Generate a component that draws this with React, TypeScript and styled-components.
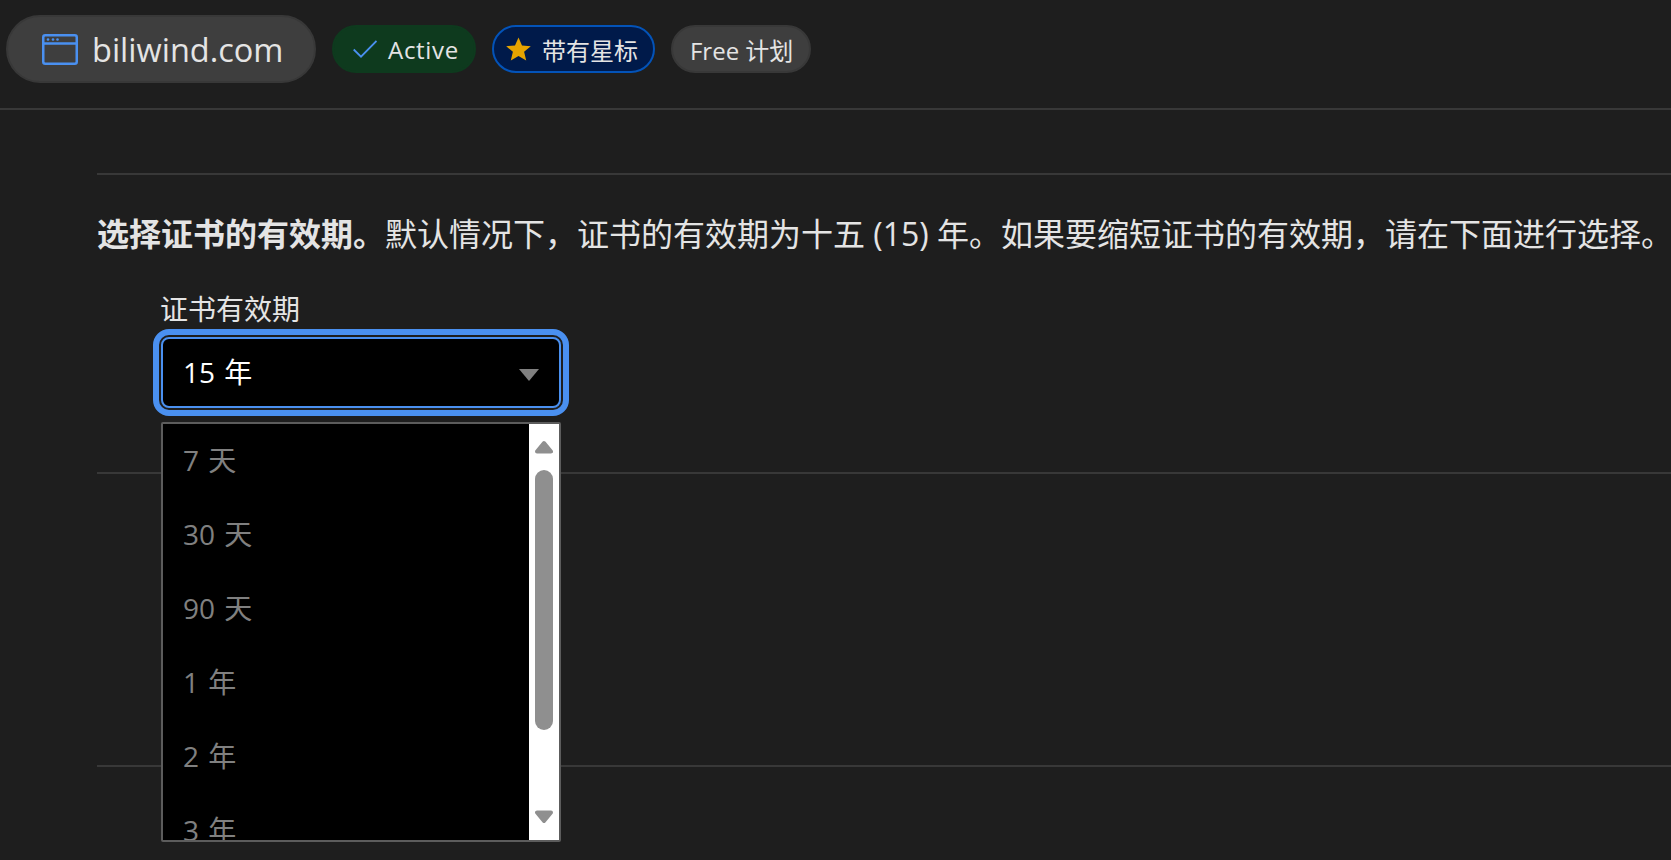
import { createGlobalStyle, styled } from 'styled-components';

const GlobalStyle = createGlobalStyle`
  html, body {
    margin: 0;
    height: 100%;
    background: #1e1e1e;
    overflow: hidden;
  }
  body {
    font-family: 'Open Sans', 'Noto Sans CJK SC', sans-serif;
    color: #e4e4e4;
  }
`;

const Page = styled.div`
  width: 1671px;
  height: 860px;
  overflow: hidden;
`;

const Header = styled.header`
  height: 110px;
  box-sizing: border-box;
  padding: 15px 0 0 6px;
  display: flex;
  align-items: flex-start;
  gap: 16px;
  border-bottom: 2px solid #383838;
`;

const DomainPill = styled.div`
  width: 310px;
  height: 68px;
  box-sizing: border-box;
  padding-left: 34px;
  display: flex;
  align-items: center;
  gap: 14px;
  border: 2px solid #383838;
  border-radius: 34px;
  background: #3e3e3e;
  font-size: 32.5px;
`;

const Badge = styled.div<{ $tone: 'green' | 'blue' | 'gray' }>`
  height: 48px;
  margin-top: 10px;
  box-sizing: border-box;
  padding: 0 ${(p) => (p.$tone === 'gray' ? 16 : 15)}px 0
    ${(p) => (p.$tone === 'green' ? 19 : p.$tone === 'blue' ? 12 : 17)}px;
  display: flex;
  align-items: center;
  gap: 11px;
  border-radius: 24px;
  font-size: 24px;
  letter-spacing: ${(p) => (p.$tone === 'green' ? '0.7px' : '0')};
  border: 2px solid
    ${(p) =>
      p.$tone === 'green' ? '#0e3a1e' : p.$tone === 'blue' ? '#0353b8' : '#383838'};
  background: ${(p) =>
    p.$tone === 'green' ? '#0e3a1e' : p.$tone === 'blue' ? '#001a4a' : '#3e3e3e'};
`;

const Main = styled.main`
  padding-left: 97px;
`;

const Section = styled.section`
  margin-top: 63px;
  height: 299px;
  box-sizing: border-box;
  border-top: 2px solid #383838;
  position: relative;
`;

const Description = styled.p`
  margin: 39px 0 0;
  font-size: 32px;
  line-height: 40px;
  white-space: nowrap;
  strong {
    font-weight: 700;
  }
`;

const FieldLabel = styled.div`
  margin: 35px 0 0 63px;
  font-size: 28px;
  line-height: 40px;
`;

const Select = styled.div`
  margin: 8px 0 0 64px;
  width: 400px;
  height: 71px;
  box-sizing: border-box;
  padding: 0 20px 3px 20px;
  display: flex;
  align-items: center;
  justify-content: space-between;
  background: #000;
  color: #fff;
  font-size: 28px;
  word-spacing: 2px;
  border: 2px solid #4a90f0;
  border-radius: 8px;
  outline: 6px solid #4a90f0;
  outline-offset: 2px;
`;

const Caret = styled.span`
  width: 0;
  height: 0;
  margin-top: 7px;
  border-left: 10px solid transparent;
  border-right: 10px solid transparent;
  border-top: 12px solid #808080;
`;

const Dropdown = styled.div`
  position: absolute;
  z-index: 2;
  left: 64px;
  top: 247px;
  width: 400px;
  height: 420px;
  box-sizing: border-box;
  border: 2px solid #5c5c5c;
  border-radius: 2px;
  display: flex;
  background: #000;
  overflow: hidden;
`;

const OptionList = styled.ul`
  flex: 1;
  margin: -2px 0 0;
  padding: 0;
  list-style: none;
`;

const Option = styled.li`
  height: 74px;
  padding-left: 20px;
  display: flex;
  align-items: center;
  font-size: 28px;
  word-spacing: 2px;
  color: #808080;
`;

const ScrollTrack = styled.div`
  width: 30px;
  background: #fff;
  display: flex;
  flex-direction: column;
  align-items: center;
  padding-top: 16px;
  box-sizing: border-box;
`;

const ScrollThumb = styled.div`
  width: 18px;
  height: 260px;
  margin-top: 16px;
  border-radius: 9px;
  background: #8f8f8f;
`;

const ScrollArrow = styled.svg<{ $down?: boolean }>`
  width: 18px;
  height: 14px;
  display: block;
  margin-top: ${(p) => (p.$down ? 'auto' : '0')};
  margin-bottom: ${(p) => (p.$down ? '16px' : '0')};
  transform: ${(p) => (p.$down ? 'rotate(180deg)' : 'none')};
`;

const LowerSection = styled.section`
  height: 291px;
  border-top: 2px solid #383838;
  border-bottom: 2px solid #383838;
`;

const options = ['7 天', '30 天', '90 天', '1 年', '2 年', '3 年'];

function ArrowShape({ down }: { down?: boolean }) {
  return (
    <ScrollArrow $down={down} viewBox="0 0 18 14">
      <path d="M9 3 L16 11.5 H2 Z" fill="#8f8f8f" stroke="#8f8f8f" strokeWidth="4" strokeLinejoin="round" />
    </ScrollArrow>
  );
}

export default function App() {
  return (
    <Page>
      <GlobalStyle />
      <Header>
        <DomainPill>
          <svg width="36" height="31" viewBox="0 0 36 31" fill="none">
            <rect x="1.25" y="1.25" width="33.5" height="28.5" rx="2" stroke="#4a90f0" strokeWidth="2.5" />
            <path d="M1 9.5 H35" stroke="#4a90f0" strokeWidth="2.5" />
            <circle cx="6" cy="5.5" r="1.3" fill="#4a90f0" />
            <circle cx="11" cy="5.5" r="1.3" fill="#4a90f0" />
            <circle cx="15.5" cy="5.5" r="1.3" fill="#4a90f0" />
          </svg>
          biliwind.com
        </DomainPill>
        <Badge $tone="green">
          <svg width="24" height="18" viewBox="0 0 24 18" fill="none">
            <path d="M0.7 9.5 L8 16.7 L23.5 1" stroke="#4a90f0" strokeWidth="1.8" />
          </svg>
          Active
        </Badge>
        <Badge $tone="blue">
          <svg width="25" height="24" viewBox="0 0 25 24">
            <path d="M12.5 0.5 L16 8.4 L24.8 9.2 L18.1 14.8 L20.2 23.5 L12.5 18.9 L4.8 23.5 L6.9 14.8 L0.2 9.2 L9 8.4 Z" fill="#e6a400" />
          </svg>
          带有星标
        </Badge>
        <Badge $tone="gray">Free 计划</Badge>
      </Header>
      <Main>
        <Section>
          <Description>
            <strong>选择证书的有效期。</strong>默认情况下，证书的有效期为十五 (15) 年。如果要缩短证书的有效期，请在下面进行选择。
          </Description>
          <FieldLabel>证书有效期</FieldLabel>
          <Select>
            15 年
            <Caret />
          </Select>
          <Dropdown>
            <OptionList>
              {options.map((o) => (
                <Option key={o}>{o}</Option>
              ))}
            </OptionList>
            <ScrollTrack>
              <ArrowShape />
              <ScrollThumb />
              <ArrowShape down />
            </ScrollTrack>
          </Dropdown>
        </Section>
        <LowerSection />
      </Main>
    </Page>
  );
}
